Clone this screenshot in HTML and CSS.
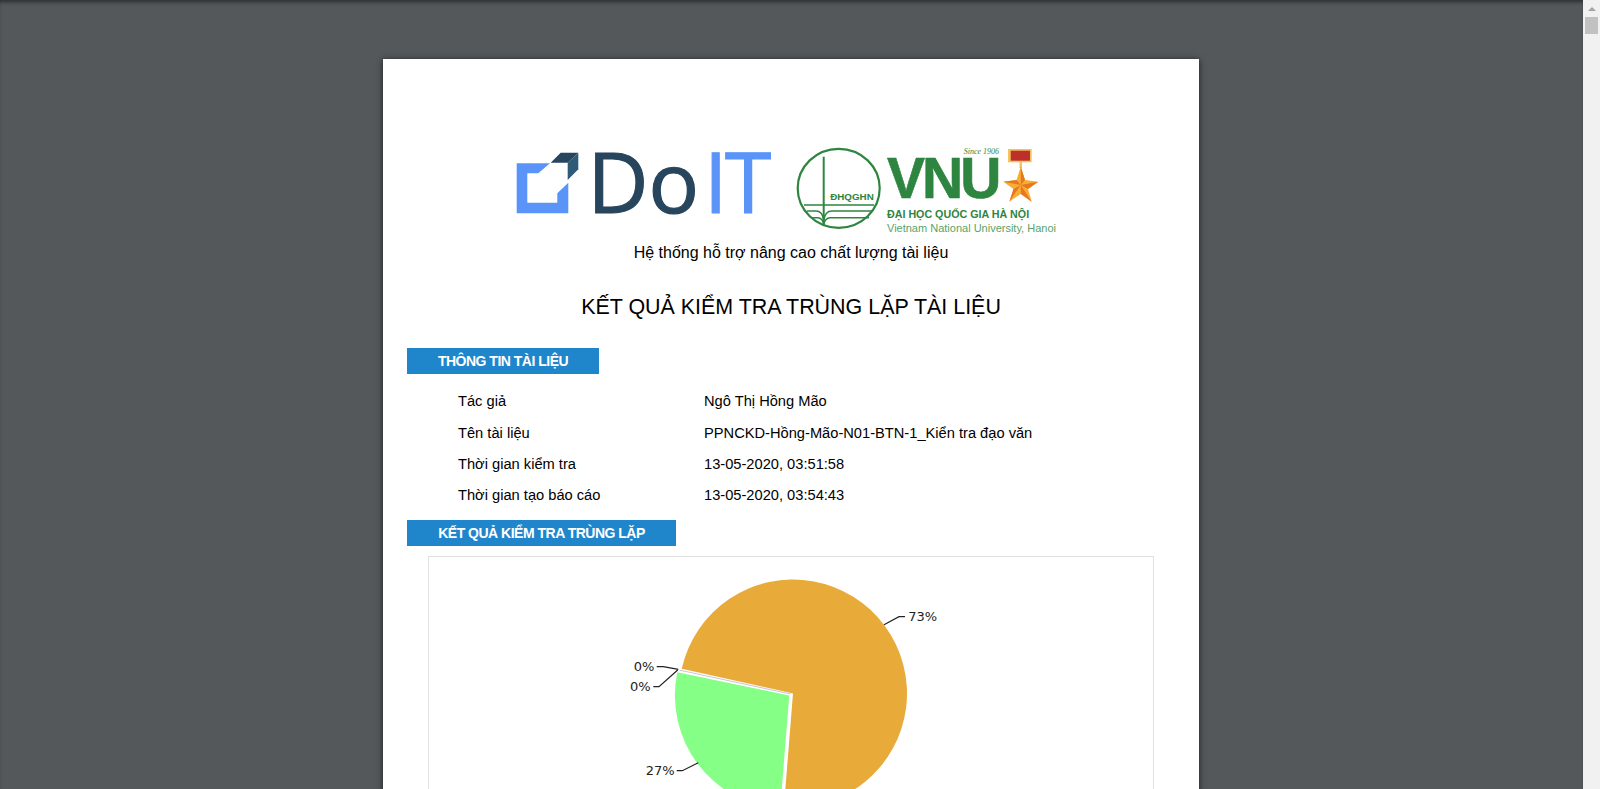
FILE: index.html
```html
<!DOCTYPE html>
<html lang="vi">
<head>
<meta charset="UTF-8">
<title>Kết quả kiểm tra trùng lặp tài liệu</title>
<link rel="stylesheet" href="styles.css">
</head>
<body>

<main class="viewer">
  <section class="page">
    <div class="logos">
      <svg class="logo" width="262" height="92" viewBox="0 0 262 92">
        <path d="M.7 15.300H34L22.300 25.300H11.300V54.700H41.300V45.300L52.300 34.700V65.300H.7Z" fill="#5b94f8"/>
        <path d="M44.700 4.700L34.700 14.700H51.700L62.300 4.700Z" fill="#27455c"/>
        <path d="M62.300 4.700V21.300L51.700 32V14.700Z" fill="#2f5a78"/>
        <text class="doit doit-do" x="71.500" y="65">Do</text>
        <text class="doit doit-it" x="188" y="65">IT</text>
      </svg>
      <svg class="logo" width="262" height="92" viewBox="0 0 262 92">
        <ellipse cx="42.700" cy="40.300" rx="41" ry="39.500" fill="none" stroke="#2e8540" stroke-width="2.200"/>
        <path d="M27.700 8.700V77" stroke="#2e8540" stroke-width="2" fill="none"/>
        <path d="M8 57H78M11 63H20C25 63 27 67 27.700 72C28.500 67 31 63 36 63H77M16 69.700H22C25 70 27 73 27.700 76C28.500 73 30 70 34 69.700H73" stroke="#2e8540" stroke-width="1.600" fill="none"/>
        <text class="vnu-seal" x="56" y="52" text-anchor="middle">ĐHQGHN</text>
        <text class="vnu-since" x="203" y="6" text-anchor="end">Since 1906</text>
        <text class="vnu-big" x="91" y="50.300">VNU</text>
        <path d="M212 1H235.700V14.300H212Z" fill="#f3c35d"/>
        <path d="M214.700 2.700H234V12.700H214.700Z" fill="#bd2f2a"/>
        <path d="M223.500 14H226V20H223.500Z" fill="#f3c35d"/>
        <path d="M224.800 18.700L229 32L242.300 33.700L232 41L235.700 53.700L224.800 46L213.300 53.700L217.500 41L207.300 33.700L220.500 32Z" fill="#f7ae35"/>
        <path d="M224.800 18.700L229 32L224.800 37ZM242.300 33.700L232 41L224.800 37ZM235.700 53.700L224.800 46V37ZM213.300 53.700L217.500 41L224.800 37ZM207.300 33.700L220.500 32L224.800 37Z" fill="#e8781f"/>
        <text class="vnu-name" x="91" y="70">ĐẠI HỌC QUỐC GIA HÀ NỘI</text>
        <text class="vnu-en" x="91" y="84.300">Vietnam National University, Hanoi</text>
      </svg>
    </div>
    <p class="tagline">Hệ thống hỗ trợ nâng cao chất lượng tài liệu</p>
    <h1 class="title">KẾT QUẢ KIỂM TRA TRÙNG LẶP TÀI LIỆU</h1>

    <h2 class="band band-info">THÔNG TIN TÀI LIỆU</h2>
    <div class="info">
      <div class="info-row"><span class="info-key">Tác giả</span><span>Ngô Thị Hồng Mão</span></div>
      <div class="info-row"><span class="info-key">Tên tài liệu</span><span>PPNCKD-Hồng-Mão-N01-BTN-1_Kiển tra đạo văn</span></div>
      <div class="info-row"><span class="info-key">Thời gian kiểm tra</span><span>13-05-2020, 03:51:58</span></div>
      <div class="info-row"><span class="info-key">Thời gian tạo báo cáo</span><span>13-05-2020, 03:54:43</span></div>
    </div>

    <h2 class="band band-result">KẾT QUẢ KIỂM TRA TRÙNG LẶP</h2>
    <div class="chart">
      <svg class="pie" width="400" height="300" viewBox="0 0 400 300">
        <path d="M202 136.500L90.700 111.800A114 114 0 1 1 192.900 250.100Z" fill="#e8ab3a"/>
        <path d="M198.300 138.500L86.300 115.200A114 114 0 0 0 189.100 252.100Z" fill="#85ff85"/>
        <path d="M88.700 113.200L199.700 137" stroke="#c9c4d6" stroke-width="1" fill="none"/>
        <path d="M293 67.700L308 59.700H314" class="pie-line"/>
        <path d="M65.700 109.700H72.300L87.300 112.300" class="pie-line"/>
        <path d="M62.300 129.700H68L86.700 113" class="pie-line"/>
        <path d="M107.300 205.700L91.300 213.700H85.700" class="pie-line"/>
        <text class="pie-label" x="317.300" y="64.300">73%</text>
        <text class="pie-label" x="42.700" y="114">0%</text>
        <text class="pie-label" x="39" y="134">0%</text>
        <text class="pie-label" x="54.700" y="218">27%</text>
      </svg>
    </div>
  </section>
</main>

<aside class="scrollbar">
  <div class="scroll-up"></div>
  <div class="scroll-thumb"></div>
</aside>

</body>
</html>
```

FILE: styles.css
```css
html, body {
  height: 100%;
  margin: 0;
}

body {
  display: flex;
  overflow: hidden;
  font-family: "Liberation Sans", Arial, sans-serif;
  color: #000;
  background: #54585b;
}

.viewer {
  flex: 1;
  display: flex;
  justify-content: center;
  align-items: flex-start;
  height: 100%;
  padding-right: 1px;
  overflow: hidden;
  box-shadow: inset 0 4px 4px -2px rgba(0, 0, 0, 0.5);
}

.page {
  flex: none;
  width: 816px;
  height: 1056px;
  margin-top: 59px;
  padding: 89px 24px 0;
  box-sizing: border-box;
  background: #fff;
  box-shadow: 0 1px 6px rgba(0, 0, 0, 0.7);
}

.logos {
  display: flex;
  gap: 18px;
  height: 92px;
  padding-left: 109px;
}

.logo {
  flex: none;
  overflow: visible;
}

.doit {
  font: 400 84px "Open Sans", sans-serif;
  stroke-width: 1.2px;
}

.doit-do {
  fill: #27455c;
  stroke: #27455c;
}

.doit-it {
  fill: #5b94f8;
  stroke: #5b94f8;
  letter-spacing: -2.5px;
}

.vnu-seal {
  font: 700 9.800px "Liberation Sans", sans-serif;
  fill: #2e8540;
}

.vnu-since {
  font: italic 8px "Liberation Serif", serif;
  fill: #2e8540;
}

.vnu-big {
  font: 700 57px "Liberation Sans", sans-serif;
  letter-spacing: -3px;
  fill: #2e8540;
  stroke: #2e8540;
  stroke-width: 0.6px;
}

.vnu-name {
  font: 700 10.700px "Liberation Sans", sans-serif;
  fill: #2e8540;
}

.vnu-en {
  font: 400 11px "Liberation Sans", sans-serif;
  fill: #58a468;
}

.tagline {
  margin: 4px 0 0;
  font-size: 16px;
  line-height: 18px;
  text-align: center;
}

.title {
  margin: 31px 0 0;
  font-size: 21.450px;
  font-weight: 400;
  line-height: 28px;
  text-align: center;
}

.band {
  margin: 0;
  height: 26px;
  color: #fff;
  background: #2086cc;
  font-size: 14px;
  font-weight: 700;
  letter-spacing: -0.5px;
  line-height: 26px;
  text-align: center;
}

.band-info {
  width: 192px;
  margin-top: 27px;
}

.band-result {
  width: 269px;
}

.info {
  padding: 12.400px 0 8.400px 51px;
}

.info-row {
  display: flex;
  height: 31.300px;
  font-size: 14.670px;
  line-height: 31.300px;
}

.info-key {
  width: 246px;
}

.chart {
  display: flex;
  justify-content: center;
  margin: 10px 21px 0;
  height: 400px;
  border: 1px solid #e2e2e2;
}

.pie-line {
  fill: none;
  stroke: #222;
  stroke-width: 1.200;
}

.pie-label {
  font: 13px "DejaVu Sans", sans-serif;
  fill: #222;
}

.scrollbar {
  flex: none;
  display: flex;
  flex-direction: column;
  align-items: center;
  width: 17px;
  background: #f1f1f1;
}

.scroll-up {
  width: 0;
  height: 0;
  margin-top: 7px;
  border: 4px solid transparent;
  border-top: 0;
  border-bottom: 4px solid #a3a3a3;
}

.scroll-thumb {
  width: 13px;
  height: 17px;
  margin-top: 6px;
  background: #c1c1c1;
}
```
